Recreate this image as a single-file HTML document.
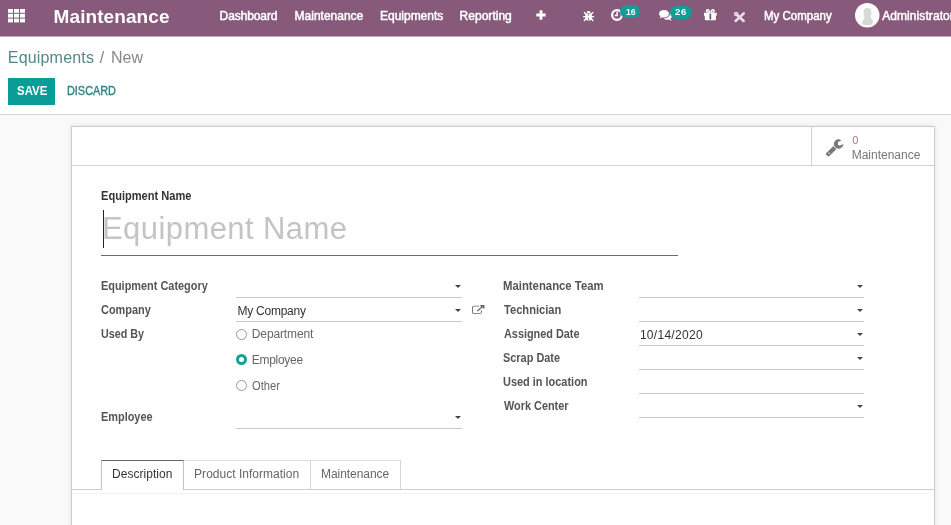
<!DOCTYPE html>
<html><head><meta charset="utf-8"><title>Maintenance</title>
<style>
*{box-sizing:border-box;margin:0;padding:0}
html,body{width:951px;height:525px;overflow:hidden;background:#f9f9f9;font-family:"Liberation Sans",sans-serif;color:#4c4c4c;font-size:12px}
.abs{position:absolute}
.t{position:absolute;white-space:nowrap;will-change:opacity;opacity:.999;transform-origin:0 0}
svg{position:absolute;overflow:visible}
#nav{position:absolute;left:0;top:0;width:951px;height:36px;background:#875a7b}
#navb{position:absolute;left:0;top:36px;width:951px;height:1px;background:#c4adbe}
#cp{position:absolute;left:0;top:37px;width:951px;height:78px;background:#fff;border-bottom:1px solid #d4d4d4}
#sheet{position:absolute;left:71px;top:126px;width:864px;height:420px;background:#fff;border:1px solid #cccccc;box-shadow:0 0 5px rgba(0,0,0,.10)}
.line{position:absolute;height:1px;background:#c8c8c8}
.caret{position:absolute;width:0;height:0;margin-left:-0.3px;border-left:3.8px solid transparent;border-right:3.8px solid transparent;border-top:3.8px solid #444}
.badge{position:absolute;height:13px;border-radius:6.5px;background:#0f9d94}
.radio{position:absolute;width:11px;height:11px;border-radius:50%;border:1px solid #999;background:#fff}
.radio.on{border:3.5px solid #12a098;background:#fff}
</style></head><body>
<div id="nav"></div><div id="navb"></div>
<!-- apps grid -->
<svg style="left:8px;top:8.5px" width="17" height="13.5" viewBox="0 0 17 13.5"><g fill="#fff"><rect x="0" y="0" width="5" height="3.8"/><rect x="6" y="0" width="5" height="3.8"/><rect x="12" y="0" width="5" height="3.8"/><rect x="0" y="4.8" width="5" height="3.8"/><rect x="6" y="4.8" width="5" height="3.8"/><rect x="12" y="4.8" width="5" height="3.8"/><rect x="0" y="9.6" width="5" height="3.8"/><rect x="6" y="9.6" width="5" height="3.8"/><rect x="12" y="9.6" width="5" height="3.8"/></g></svg>
<!-- plus -->
<svg style="left:536px;top:10.4px" width="10" height="10" viewBox="0 0 10 10"><path fill="#fff" d="M3.6 0.3h2.8v3.3h3.3v2.8h-3.3v3.3h-2.8v-3.3h-3.3v-2.8h3.3z"/></svg>
<!-- bug -->
<svg style="left:583px;top:9.800px" width="11.200" height="11.400" viewBox="0 0 12 12"><g fill="#fff"><path d="M3.700 3.300a2.300 2.400 0 0 1 4.600 0z"/><path d="M2.600 4h3.050v7.300C3.900 11.300 2.600 9.900 2.600 8.200z"/><path d="M9.400 4H6.350v7.300c1.750 0 3.050-1.400 3.050-3.100z"/><rect x="0.100" y="6.300" width="11.800" height="1.500"/><path d="M0.500 2.700l1.100-1 2.400 2.400-1.100 1.100zM11.500 2.700l-1.100-1-2.400 2.400 1.100 1.100zM0.500 11.200l1.100 1 2.400-2.600-1.100-1zM11.500 11.200l-1.100 1-2.400-2.600 1.100-1z"/></g></svg>
<!-- clock -->
<svg style="left:610.800px;top:8.700px" width="12" height="12" viewBox="0 0 12 12"><circle cx="6" cy="6" r="4.900" fill="none" stroke="#fff" stroke-width="2.200"/><path d="M5.400 2.800h1.500v4.400h-3.200v-1.400h1.700z" fill="#fff"/></svg>
<div class="badge" style="left:620.300px;top:5.200px;width:20.200px"></div>
<!-- comments -->
<svg style="left:659px;top:10.2px" width="13" height="10.8" viewBox="0 0 13 10.8"><g fill="#fff"><path d="M5 0C2.2 0 0 1.6 0 3.7c0 1.1.7 2.1 1.700 2.800-.2.700-.6 1.300-1.200 1.800 1.100-.1 2.100-.5 2.900-1.100.5.100 1 .2 1.600.2 2.800 0 5-1.600 5-3.700S7.800 0 5 0z"/><path d="M11.300 8.600c1-.7 1.700-1.600 1.700-2.700 0-1.200-.8-2.300-2.100-3 .1.300.1.600.1.900 0 2.600-2.700 4.600-6 4.600h-.5c.9.900 2.300 1.400 3.900 1.400.5 0 1.100-.1 1.600-.2.800.6 1.800 1 2.900 1.100-.6-.5-1.400-1.300-1.600-2.100z"/></g></svg>
<div class="badge" style="left:670.300px;top:5.500px;width:22px"></div>
<!-- gift -->
<svg style="left:704.200px;top:8.800px" width="12.700" height="11.200" viewBox="0 0 12.700 11.200"><g fill="#fff"><path d="M0 3.700h12.700v3.100h-.8v3.600a.8.800 0 0 1-.8.800H1.600a.8.800 0 0 1-.8-.8V6.800H0z"/><path d="M3.900 0C2.700 0 1.800.8 1.800 1.900S2.700 3.800 3.900 3.800h2.450C6.100 1.700 5.200 0 3.900 0zM8.800 0c1.200 0 2.100.8 2.100 1.900s-.9 1.900-2.100 1.900H6.350C6.600 1.700 7.500 0 8.800 0z"/></g><rect x="5.500" y="4.600" width="1.700" height="5.900" fill="#7a5070"/><circle cx="4" cy="2.100" r=".7" fill="#875a7b"/><circle cx="8.700" cy="2.100" r=".7" fill="#875a7b"/></svg>
<!-- tools -->
<svg style="left:734.100px;top:11.800px" width="11.200" height="10.400" viewBox="0 0 11.200 10.400"><g stroke="#ecdde8" stroke-width="2.600" stroke-linecap="round" fill="none"><path d="M9.800 1.400L1.600 9"/><path d="M3.200 3L9.600 9"/></g><circle cx="2.200" cy="1.900" r="1.500" fill="none" stroke="#ecdde8" stroke-width="1.500"/></svg>
<!-- avatar -->
<svg style="left:854.700px;top:2.600px" width="24.500" height="24.500" viewBox="0 0 24.500 24.500"><circle cx="12.250" cy="12.250" r="12.250" fill="#fdfbfd"/><path fill="#d6d9d6" d="M8.600 9.200c0-2.600 1.500-4.200 3.900-4.200s3.900 1.600 3.900 4.200c0 1.600-.3 2.900-.7 3.900-.2.500-.2 1.200.1 1.900.4.900 1.300 1.300 1.900 1.700v4.600c-1.400.6-3.100.9-5.200.9s-3.800-.3-5.200-.9v-3.300c.7-.5 1.500-1.100 1.900-2 .3-.700.400-1.700.100-2.500-.4-1.200-.700-2.700-.700-4.300z"/></svg>

<div id="cp"></div>
<div class="abs" style="left:8px;top:78px;width:47px;height:26.500px;background:#0a9d98"></div>

<div id="sheet"></div>
<!-- button box -->
<div class="abs" style="left:72px;top:165px;width:862px;height:1px;background:#d2d2d2"></div>
<div class="abs" style="left:811px;top:127px;width:1px;height:38px;background:#d2d2d2"></div>
<svg style="left:825.400px;top:138px" width="19" height="18.600" viewBox="0 0 1792 1792" preserveAspectRatio="none"><path fill="#777" d="M448 1472q0-26-19-45t-45-19-45 19-19 45 19 45 45 19 45-19 19-45zm644-420l-682 682q-37 37-90 37-52 0-91-37l-106-108q-38-36-38-90 0-53 38-91l681-681q39 98 114.500 173.500t173.500 114.500zm634-435q0 39-23 106-47 134-164.500 217.500t-258.500 83.500q-185 0-316.500-131.500t-131.500-316.500 131.500-316.500 316.500-131.500q58 0 121.500 16.500t107.500 46.500q16 11 16 28t-16 28l-293 169v224l193 107q5-3 79-48.500t135.500-81 70.500-35.500q15 0 23.500 10t8.500 25z"/></svg>

<!-- title input -->
<div class="abs" style="left:103px;top:210px;width:1px;height:38px;background:#222"></div>
<div class="abs" style="left:101px;top:255px;width:577px;height:1px;background:#6a6a6a"></div>

<!-- field lines -->
<div class="line" style="left:236px;top:297px;width:226px"></div>
<div class="line" style="left:236px;top:321px;width:226px"></div>
<div class="line" style="left:236px;top:428px;width:226px"></div>
<div class="line" style="left:639px;top:297px;width:225px"></div>
<div class="line" style="left:639px;top:321px;width:225px"></div>
<div class="line" style="left:639px;top:345px;width:225px"></div>
<div class="line" style="left:639px;top:369px;width:225px"></div>
<div class="line" style="left:639px;top:393px;width:225px"></div>
<div class="line" style="left:639px;top:417px;width:225px"></div>
<!-- carets -->
<div class="caret" style="left:455px;top:285px"></div>
<div class="caret" style="left:455px;top:309px"></div>
<div class="caret" style="left:455px;top:416px"></div>
<div class="caret" style="left:857px;top:285px"></div>
<div class="caret" style="left:857px;top:309px"></div>
<div class="caret" style="left:857px;top:333px"></div>
<div class="caret" style="left:857px;top:357px"></div>
<div class="caret" style="left:857px;top:405px"></div>
<!-- external link -->
<svg style="left:472px;top:305px" width="12.500" height="10.400" viewBox="0 0 1792 1792" preserveAspectRatio="none"><path fill="#666" d="M1408 928v320q0 119-84.500 203.500t-203.500 84.500h-832q-119 0-203.500-84.500t-84.500-203.500v-832q0-119 84.500-203.500t203.500-84.500h704q14 0 23 9t9 23v64q0 14-9 23t-23 9h-704q-66 0-113 47t-47 113v832q0 66 47 113t113 47h832q66 0 113-47t47-113v-320q0-14 9-23t23-9h64q14 0 23 9t9 23zm384-864v512q0 26-19 45t-45 19-45-19l-176-176-652 652q-10 10-23 10t-23-10l-114-114q-10-10-10-23t10-23l652-652-176-176q-19-19-19-45t19-45 45-19h512q26 0 45 19t19 45z"/></svg>
<!-- radios -->
<div class="radio" style="left:235.800px;top:328.800px"></div>
<div class="radio on" style="left:235.800px;top:354.300px"></div>
<div class="radio" style="left:235.800px;top:380.400px"></div>

<!-- tabs -->
<div class="abs" style="left:72px;top:489px;width:862px;height:1px;background:#cfcfcf"></div>
<div class="abs" style="left:101px;top:460px;width:83px;height:30px;background:#fff;border:1px solid #c4c4c4;border-top-color:#666;border-bottom:none"></div>
<div class="abs" style="left:184px;top:460px;width:127px;height:29px;border-top:1px solid #ddd;border-right:1px solid #d4d4d4"></div>
<div class="abs" style="left:311px;top:460px;width:90px;height:29px;border-top:1px solid #ddd;border-right:1px solid #d4d4d4"></div>
<div class="abs" style="left:72px;top:493px;width:858px;height:1px;background:#f3f3f3"></div>

<span class="t" style="left:53.6px;top:6.7px;font-size:19px;line-height:19px;color:#fff;letter-spacing:0.08px;font-weight:bold;">Maintenance</span>
<span class="t" style="left:219.6px;top:10.0px;font-size:12px;line-height:12px;color:#fff;letter-spacing:-0.10px;-webkit-text-stroke:0.5px;">Dashboard</span>
<span class="t" style="left:294.6px;top:10.0px;font-size:12px;line-height:12px;color:#fff;letter-spacing:-0.01px;-webkit-text-stroke:0.5px;">Maintenance</span>
<span class="t" style="left:380.1px;top:10.0px;font-size:12px;line-height:12px;color:#fff;letter-spacing:-0.03px;-webkit-text-stroke:0.5px;">Equipments</span>
<span class="t" style="left:459.6px;top:10.0px;font-size:12px;line-height:12px;color:#fff;letter-spacing:0.02px;-webkit-text-stroke:0.5px;">Reporting</span>
<span class="t" style="left:763.7px;top:10.0px;font-size:12px;line-height:12px;color:#fff;transform:scaleX(0.9580);-webkit-text-stroke:0.5px;">My Company</span>
<span class="t" style="left:882.2px;top:10.0px;font-size:12px;line-height:12px;color:#fff;letter-spacing:0.08px;-webkit-text-stroke:0.5px;">Administrator</span>
<span class="t" style="left:626.0px;top:6.8px;font-size:9.5px;line-height:9.5px;color:#fff;transform:scaleX(0.9128);font-weight:bold;">16</span>
<span class="t" style="left:675.0px;top:7.1px;font-size:9.5px;line-height:9.5px;color:#fff;letter-spacing:0.60px;font-weight:bold;">26</span>
<span class="t" style="left:7.8px;top:49.9px;font-size:16px;line-height:16px;color:#508a8a;letter-spacing:0.18px;">Equipments</span>
<span class="t" style="left:99.8px;top:49.9px;font-size:16px;line-height:16px;color:#888;">/</span>
<span class="t" style="left:111.0px;top:49.9px;font-size:16px;line-height:16px;color:#888;letter-spacing:-0.02px;">New</span>
<span class="t" style="left:17.0px;top:84.5px;font-size:12px;line-height:12px;color:#fff;transform:scaleX(0.9561);font-weight:bold;">SAVE</span>
<span class="t" style="left:66.9px;top:84.5px;font-size:12px;line-height:12px;color:#2f8585;transform:scaleX(0.9062);-webkit-text-stroke:0.4px;">DISCARD</span>
<span class="t" style="left:852.2px;top:135.3px;font-size:11px;line-height:11px;color:#9a7b91;">0</span>
<span class="t" style="left:851.7px;top:148.5px;font-size:12px;line-height:12px;color:#777;letter-spacing:-0.01px;">Maintenance</span>
<span class="t" style="left:101.0px;top:190.0px;font-size:12px;line-height:12px;color:#333;transform:scaleX(0.9230);font-weight:bold;">Equipment Name</span>
<span class="t" style="left:102.0px;top:213.3px;font-size:31px;line-height:31px;color:#c4c4c4;letter-spacing:0.42px;">Equipment Name</span>
<span class="t" style="left:100.6px;top:280.0px;font-size:12px;line-height:12px;color:#555;transform:scaleX(0.9099);font-weight:bold;">Equipment Category</span>
<span class="t" style="left:100.8px;top:304.0px;font-size:12px;line-height:12px;color:#555;transform:scaleX(0.9111);font-weight:bold;">Company</span>
<span class="t" style="left:100.6px;top:328.0px;font-size:12px;line-height:12px;color:#555;transform:scaleX(0.8952);font-weight:bold;">Used By</span>
<span class="t" style="left:100.6px;top:411.1px;font-size:12px;line-height:12px;color:#555;transform:scaleX(0.9099);font-weight:bold;">Employee</span>
<span class="t" style="left:237.4px;top:304.8px;font-size:12px;line-height:12px;color:#333;letter-spacing:-0.23px;">My Company</span>
<span class="t" style="left:251.8px;top:328.0px;font-size:12px;line-height:12px;color:#666;letter-spacing:-0.13px;">Department</span>
<span class="t" style="left:251.8px;top:353.8px;font-size:12px;line-height:12px;color:#666;letter-spacing:-0.29px;">Employee</span>
<span class="t" style="left:252.3px;top:379.8px;font-size:12px;line-height:12px;color:#666;transform:scaleX(0.9299);">Other</span>
<span class="t" style="left:503.1px;top:280.0px;font-size:12px;line-height:12px;color:#555;transform:scaleX(0.9448);font-weight:bold;">Maintenance Team</span>
<span class="t" style="left:503.6px;top:304.0px;font-size:12px;line-height:12px;color:#555;transform:scaleX(0.9267);font-weight:bold;">Technician</span>
<span class="t" style="left:503.6px;top:328.0px;font-size:12px;line-height:12px;color:#555;transform:scaleX(0.9063);font-weight:bold;">Assigned Date</span>
<span class="t" style="left:503.3px;top:352.0px;font-size:12px;line-height:12px;color:#555;transform:scaleX(0.9101);font-weight:bold;">Scrap Date</span>
<span class="t" style="left:503.1px;top:376.0px;font-size:12px;line-height:12px;color:#555;transform:scaleX(0.9118);font-weight:bold;">Used in location</span>
<span class="t" style="left:503.8px;top:400.0px;font-size:12px;line-height:12px;color:#555;transform:scaleX(0.9070);font-weight:bold;">Work Center</span>
<span class="t" style="left:639.9px;top:328.6px;font-size:12px;line-height:12px;color:#333;letter-spacing:0.29px;">10/14/2020</span>
<span class="t" style="left:112.0px;top:467.8px;font-size:12px;line-height:12px;color:#333;letter-spacing:0.04px;">Description</span>
<span class="t" style="left:194.1px;top:467.8px;font-size:12px;line-height:12px;color:#666;letter-spacing:0.02px;">Product Information</span>
<span class="t" style="left:321.0px;top:467.8px;font-size:12px;line-height:12px;color:#666;letter-spacing:-0.06px;">Maintenance</span>
</body></html>
